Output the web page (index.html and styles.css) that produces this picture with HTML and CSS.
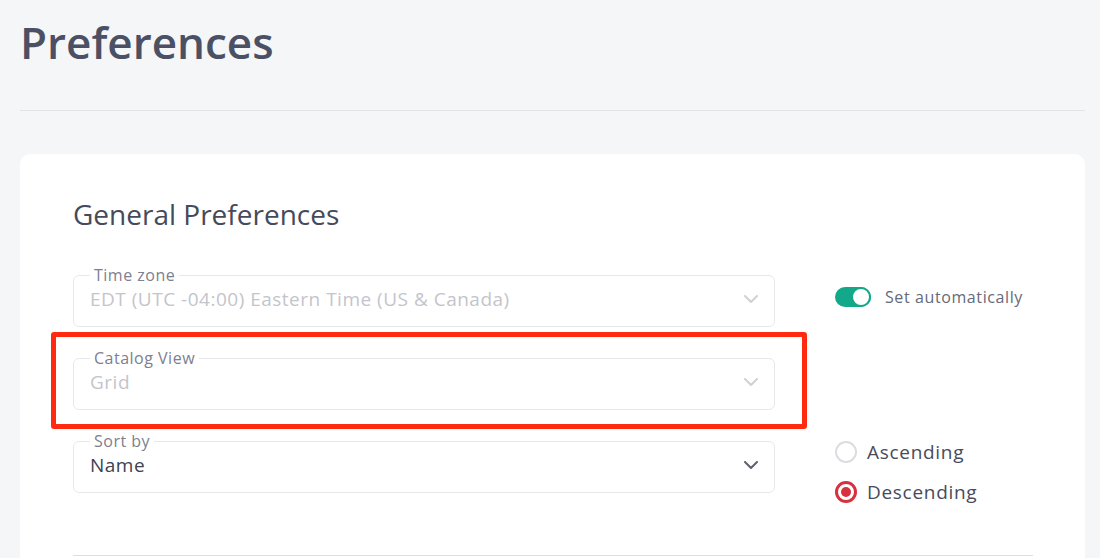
FILE: index.html
```html
<!DOCTYPE html>
<html>
  <head>
    <title>Preferences</title>
    <link rel="stylesheet" href="styles.css">
  </head>
  <body>
    <h1 class="page-title">Preferences</h1>
    <hr class="page-rule" />

    <div class="card">
      <h2 class="card-title">General Preferences</h2>

      <div class="pref-grid">
        <fieldset class="field disabled">
          <legend>Time zone</legend>
          <div class="select">
            <span>EDT (UTC -04:00) Eastern Time (US &amp; Canada)</span>
            <svg class="chevron" width="14" height="8" viewBox="0 0 14 8"><polyline points="1,1 7,7 13,1" /></svg>
          </div>
        </fieldset>
        <div class="side">
          <label class="switch-row">
            <span class="switch on"><span class="knob"></span></span>
            <span>Set automatically</span>
          </label>
        </div>

        <div class="highlight-wrap">
          <fieldset class="field disabled">
            <legend>Catalog View</legend>
            <div class="select">
              <span>Grid</span>
              <svg class="chevron" width="14" height="8" viewBox="0 0 14 8"><polyline points="1,1 7,7 13,1" /></svg>
            </div>
          </fieldset>
          <!-- annotation box drawn over the field -->
          <span class="highlight"></span>
        </div>
        <div class="side"></div>

        <fieldset class="field">
          <legend>Sort by</legend>
          <div class="select">
            <span>Name</span>
            <svg class="chevron" width="14" height="8" viewBox="0 0 14 8"><polyline points="1,1 7,7 13,1" /></svg>
          </div>
        </fieldset>
        <div class="side radios">
          <label class="radio-row">
            <span class="radio"></span>
            <span>Ascending</span>
          </label>
          <label class="radio-row">
            <span class="radio checked"></span>
            <span>Descending</span>
          </label>
        </div>
      </div>

      <hr class="card-rule" />
    </div>
  </body>
</html>
```

FILE: styles.css
```css
/* Preferences page */
body {
  margin: 0;
  padding: 0 15px 0 20px;
  font-family: "Open Sans", Arial, sans-serif;
  background-color: #f5f6f8;
  color: #474b5b;
}

.page-title {
  margin: 0;
  padding-top: 12px;
  font-size: 44px;
  line-height: 60px;
  font-weight: 600;
  color: #4b5064;
}

.page-rule {
  margin: 38px 0 43px;
  border: none;
  border-top: 1px solid #e3e4e8;
}

.card {
  background-color: #fff;
  border-radius: 10px;
  padding: 40px 52px 0 53px;
  height: 420px;
}

.card-title {
  margin: 0 0 32px;
  font-size: 28px;
  line-height: 40px;
  font-weight: 400;
  color: #464a5a;
}

.pref-grid {
  display: grid;
  grid-template-columns: 702px 1fr;
  align-items: start;
  column-gap: 60px;
  row-gap: 22px;
}

.field {
  margin: 0;
  padding: 0 16px 12px 16px;
  border: 1px solid #e7e8eb;
  border-radius: 6px;
}

.field legend {
  padding: 0 4px;
  font-size: 16px;
  line-height: 18px;
  letter-spacing: 0.5px;
  color: #7d8090;
}

.select {
  display: flex;
  align-items: center;
  justify-content: space-between;
  height: 30px;
  font-size: 19px;
  letter-spacing: 0.5px;
  color: #3d4151;
}

.chevron {
  fill: none;
  stroke: #5d6170;
  stroke-width: 2;
  stroke-linecap: round;
  stroke-linejoin: round;
}

.disabled .select {
  color: #c3c5cb;
}

.disabled .chevron {
  stroke: #cfd1d5;
}

.side {
  padding-top: 20px;
}

.switch-row {
  display: flex;
  align-items: center;
  gap: 14px;
  font-size: 16px;
  letter-spacing: 0.6px;
  color: #666a78;
}

.switch {
  position: relative;
  width: 36px;
  height: 20px;
  border-radius: 10px;
  background-color: #e1e2e6;
}

.switch.on {
  background-color: #13a889;
}

.switch .knob {
  position: absolute;
  top: 0;
  left: 0;
  width: 16px;
  height: 16px;
  border: 2px solid #13a889;
  border-radius: 50%;
  background-color: #fff;
}

.switch.on .knob {
  left: 16px;
}

.highlight-wrap {
  position: relative;
}

.highlight {
  position: absolute;
  top: -17px;
  left: -22px;
  right: -32px;
  bottom: -19px;
  border: 5px solid #ff2a10;
  border-radius: 3px;
}

.radios {
  display: flex;
  flex-direction: column;
  gap: 14px;
  padding-top: 7px;
}

.radio-row {
  display: flex;
  align-items: center;
  gap: 10px;
  height: 26px;
  font-size: 19px;
  letter-spacing: 0.7px;
  color: #474b5b;
}

.radio {
  width: 18px;
  height: 18px;
  border: 2px solid #dcdde0;
  border-radius: 50%;
  position: relative;
}

.radio.checked {
  border: 3px solid #d7303f;
  width: 16px;
  height: 16px;
}

.radio.checked::after {
  content: "";
  position: absolute;
  top: 3px;
  left: 3px;
  width: 10px;
  height: 10px;
  border-radius: 50%;
  background-color: #d7303f;
}

.card-rule {
  margin: 50px 0 0;
  border: none;
  border-top: 1px solid #dddee2;
}
```
